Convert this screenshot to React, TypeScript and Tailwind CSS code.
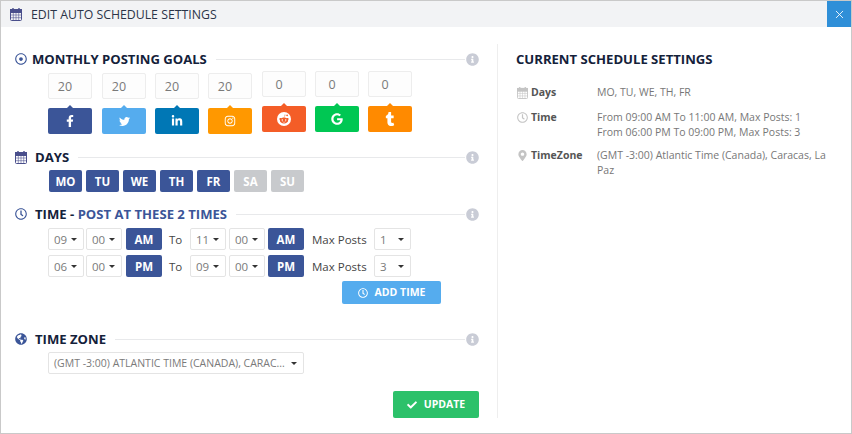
import type { ReactNode } from 'react';
import { X } from 'lucide-react';
import {
  FaCheck,
  FaFacebookF,
  FaGlobeAmericas,
  FaGoogle,
  FaInfoCircle,
  FaInstagram,
  FaLinkedinIn,
  FaMapMarkerAlt,
  FaRedditAlien,
  FaRegClock,
  FaRegDotCircle,
  FaTumblr,
  FaTwitter,
} from 'react-icons/fa';

const goals = [
  { value: '20', bg: 'bg-[#3b5598]', text: 'text-[#3b5598]', icon: <FaFacebookF className="text-[12px]" />, low: true, ml: 'ml-0' },
  { value: '20', bg: 'bg-[#55acee]', text: 'text-[#55acee]', icon: <FaTwitter className="text-[11px]" />, low: true, ml: 'ml-[10px]' },
  { value: '20', bg: 'bg-[#0077b5]', text: 'text-[#0077b5]', icon: <FaLinkedinIn className="text-[12px]" />, low: true, ml: 'ml-[9px]' },
  { value: '20', bg: 'bg-[#ff9800]', text: 'text-[#ff9800]', icon: <FaInstagram className="text-[12px]" />, low: true, ml: 'ml-[9px]' },
  { value: '0', bg: 'bg-[#f45d27]', text: 'text-[#f45d27]', icon: null, low: false, ml: 'ml-[10px]' },
  { value: '0', bg: 'bg-[#00c753]', text: 'text-[#00c753]', icon: <FaGoogle className="text-[12px]" />, low: false, ml: 'ml-[9px]' },
  { value: '0', bg: 'bg-[#ff8a00]', text: 'text-[#ff8a00]', icon: <FaTumblr className="text-[14px]" />, low: false, ml: 'ml-[9px]' },
];

const days = [
  { label: 'MO', on: true },
  { label: 'TU', on: true },
  { label: 'WE', on: true },
  { label: 'TH', on: true },
  { label: 'FR', on: true },
  { label: 'SA', on: false },
  { label: 'SU', on: false },
];

// old-style calendar with a grid, the solid/regular packaged ones look too plain
const CalendarIcon = ({ className }: { className: string }) => (
  <svg viewBox="0 0 12 13" className={className} fill="none" stroke="currentColor">
    <rect x="0.5" y="1.5" width="11" height="11" rx="1" strokeWidth="1" />
    <rect x="0.5" y="1.5" width="11" height="3" fill="currentColor" strokeWidth="1" />
    <path d="M3 0v3M9 0v3" strokeWidth="1.4" />
    <path d="M0.5 7h11M0.5 9.7h11M3.3 4.5v8M6 4.5v8M8.7 4.5v8" strokeWidth="0.55" />
  </svg>
);

const Heading = ({ icon, children, gap }: { icon: ReactNode; children: ReactNode; gap: string }) => (
  <div className="flex h-[20px] items-center">
    <span className="flex w-[12px] justify-center text-[12px] text-[#3b5598]">{icon}</span>
    <h3 className={`${gap} whitespace-nowrap text-[13.1px] font-bold text-[#14213a]`}>{children}</h3>
    <div className="ml-[9px] h-px flex-1 bg-[#e8e9eb]" />
    <FaInfoCircle className="ml-[1px] text-[13px] text-[#c9ccd6]" />
  </div>
);

const Caret = () => (
  <span className="h-0 w-0 border-x-[3.5px] border-t-[3.5px] border-x-transparent border-t-[#333]" />
);

const Select = ({ value, w }: { value: string; w: string }) => (
  <div className={`${w} flex h-[22px] items-center justify-between rounded-[2px] border border-[#e4e4e4] bg-white pl-[5px] pr-[6px] text-[11.5px] text-[#7a7a7a]`}>
    <span>{value}</span>
    <Caret />
  </div>
);

const Meridiem = ({ value }: { value: string }) => (
  <div className="flex h-[22px] w-[36px] items-center justify-center rounded-[2px] bg-[#3b5598] text-[11.5px] font-bold text-white">
    {value}
  </div>
);

const TimeRow = ({ a, b, m1, c, d, m2, max }: { a: string; b: string; m1: string; c: string; d: string; m2: string; max: string }) => (
  <div className="flex items-center">
    <Select value={a} w="w-[36px]" />
    <div className="ml-[2px]"><Select value={b} w="w-[36px]" /></div>
    <div className="ml-[4px]"><Meridiem value={m1} /></div>
    <span className="ml-[7px] w-[14px] text-[11.5px] font-medium text-[#444]">To</span>
    <div className="ml-[7px]"><Select value={c} w="w-[36px]" /></div>
    <div className="ml-[3px]"><Select value={d} w="w-[36px]" /></div>
    <div className="ml-[3px]"><Meridiem value={m2} /></div>
    <span className="ml-[8px] w-[56px] whitespace-nowrap text-[11.5px] font-medium text-[#444]">Max Posts</span>
    <div className="ml-[6px]"><Select value={max} w="w-[37px]" /></div>
  </div>
);

const InfoRow = ({ icon, label, children }: { icon: ReactNode; label: string; children: ReactNode }) => (
  <div className="flex">
    <span className="mt-[2px] flex w-[12px] justify-center text-[11px] text-[#c4c4c4]">{icon}</span>
    <span className="ml-[3px] w-[66px] text-[10.5px] font-bold text-[#555]">{label}</span>
    <div className="w-[236px] text-[10.5px] text-[#777]">{children}</div>
  </div>
);

export default function App() {
  return (
    <div
      className="h-[434px] w-[852px] overflow-hidden border border-[#c9c9c9] bg-white leading-[15px]"
      style={{ fontFamily: '"Open Sans", sans-serif' }}
    >
      <header className="flex h-[26px] items-center bg-[#f2f3f5] pl-[9px]">
        <CalendarIcon className="h-[13px] w-[12px] text-[#4a4f8c]" />
        <h2 className="ml-[9px] flex-1 text-[12.3px] font-medium text-[#2b3448]">EDIT AUTO SCHEDULE SETTINGS</h2>
        <button className="flex h-[26px] w-[24px] items-center justify-center bg-[#2f8fd8] text-white">
          <X size={13} strokeWidth={1.6} />
        </button>
      </header>

      <div className="flex">
        <section className="w-[479px] pl-[14px] pr-[1px] pt-[22px]">
          <Heading icon={<FaRegDotCircle />} gap="ml-[5px]">MONTHLY POSTING GOALS</Heading>

          <div className="ml-[33px] flex h-[63px] pt-[2px]">
            {goals.map((g, i) => (
              <div key={i} className={`${g.ml} ${g.low ? 'mt-[2px]' : ''} w-[44px]`}>
                <div className="flex h-[26px] items-center justify-center rounded-[2px] border border-[#ededed] bg-[#fdfdfd] pr-[10px] text-[12.5px] text-[#7a7a7a]">
                  {g.value}
                </div>
                <div className={`${g.bg} relative mt-[9px] flex h-[26px] items-center justify-center rounded-[2px] text-white`}>
                  <span className={`${g.text} absolute -top-[3px] left-1/2 h-0 w-0 -translate-x-1/2 border-x-[3px] border-b-[3px] border-x-transparent border-b-current`} />
                  {g.icon ?? (
                    <span className="flex h-[14px] w-[14px] items-center justify-center rounded-full bg-white text-[10px] text-[#f45d27]">
                      <FaRedditAlien />
                    </span>
                  )}
                </div>
              </div>
            ))}
          </div>

          <div className="mt-[15px]">
            <Heading icon={<CalendarIcon className="h-[13px] w-[12px] text-[#4a4f8c]" />} gap="ml-[8px]">DAYS</Heading>
          </div>
          <div className="ml-[34px] mt-[3px] flex gap-[4px]">
            {days.map((d) => (
              <div
                key={d.label}
                className={`${d.on ? 'bg-[#3b5598]' : 'bg-[#c8cacd]'} flex h-[22px] w-[33px] items-center justify-center rounded-[2px] text-[11.5px] font-bold text-white`}
              >
                {d.label}
              </div>
            ))}
          </div>

          <div className="mt-[12px]">
            <Heading icon={<FaRegClock />} gap="ml-[8px]">
              TIME - <span className="text-[#3b5598]">POST AT THESE 2 TIMES</span>
            </Heading>
          </div>
          <div className="ml-[33px] mt-[4px] flex flex-col gap-[5px]">
            <TimeRow a="09" b="00" m1="AM" c="11" d="00" m2="AM" max="1" />
            <TimeRow a="06" b="00" m1="PM" c="09" d="00" m2="PM" max="3" />
          </div>
          <div className="mt-[4px] flex justify-end pr-[38px]">
            <button className="flex h-[23px] w-[99px] items-center justify-center gap-[7px] rounded-[2px] bg-[#55acee] text-[10.5px] font-bold text-white">
              <FaRegClock className="text-[10px]" /> ADD TIME
            </button>
          </div>

          <div className="mt-[25px]">
            <Heading icon={<FaGlobeAmericas />} gap="ml-[8px]">TIME ZONE</Heading>
          </div>
          <div className="ml-[33px] mt-[3px] flex h-[22px] w-[256px] items-center justify-between rounded-[2px] border border-[#e4e4e4] pl-[5px] pr-[6px] text-[10.5px] text-[#7a7a7a]">
            <span className="whitespace-nowrap">(GMT -3:00) ATLANTIC TIME (CANADA), CARAC...</span>
            <Caret />
          </div>
          <div className="mt-[17px] flex justify-end">
            <button className="flex h-[27px] w-[86px] items-center justify-center gap-[7px] rounded-[2px] bg-[#2cc16a] text-[10.5px] font-bold text-white">
              <FaCheck className="text-[10px]" /> UPDATE
            </button>
          </div>
        </section>

        <aside className="ml-[17px] mt-[17px] h-[374px] flex-1 border-l border-[#eeeeee] pl-[18px] pt-[6px]">
          <h3 className="flex h-[18px] items-center text-[13.1px] font-bold text-[#14213a]">CURRENT SCHEDULE SETTINGS</h3>
          <div className="mt-[17px] flex flex-col">
            <InfoRow icon={<CalendarIcon className="h-[12px] w-[11px]" />} label="Days">MO, TU, WE, TH, FR</InfoRow>
            <div className="mt-[10px]">
              <InfoRow icon={<FaRegClock />} label="Time">
                From 09:00 AM To 11:00 AM, Max Posts: 1
                <br />
                From 06:00 PM To 09:00 PM, Max Posts: 3
              </InfoRow>
            </div>
            <div className="mt-[8px]">
              <InfoRow icon={<FaMapMarkerAlt />} label="TimeZone">(GMT -3:00) Atlantic Time (Canada), Caracas, La Paz</InfoRow>
            </div>
          </div>
        </aside>
      </div>
    </div>
  );
}
